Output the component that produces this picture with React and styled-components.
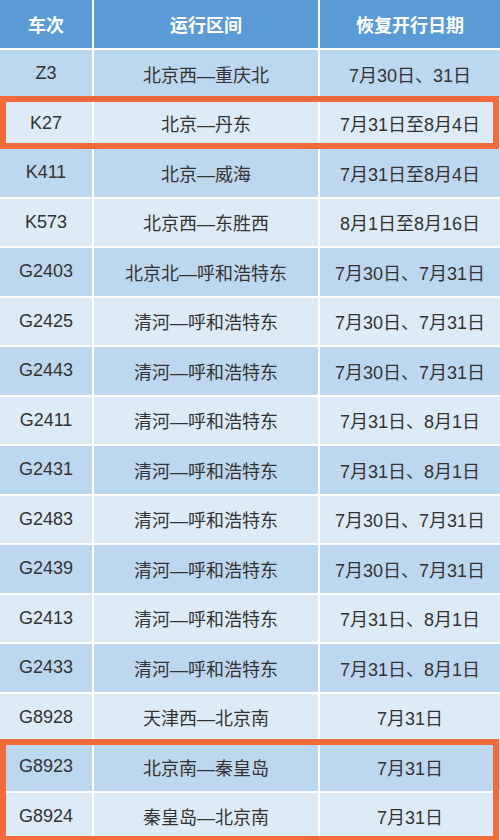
import styled, { createGlobalStyle } from 'styled-components';

const GlobalStyle = createGlobalStyle`
  html, body {
    margin: 0;
    padding: 0;
    background: #ffffff;
  }
  body {
    font-family: "Liberation Sans", "Noto Sans CJK SC", sans-serif;
  }
`;

const rows = [
  ['Z3', '北京西—重庆北', '7月30日、31日'],
  ['K27', '北京—丹东', '7月31日至8月4日'],
  ['K411', '北京—威海', '7月31日至8月4日'],
  ['K573', '北京西—东胜西', '8月1日至8月16日'],
  ['G2403', '北京北—呼和浩特东', '7月30日、7月31日'],
  ['G2425', '清河—呼和浩特东', '7月30日、7月31日'],
  ['G2443', '清河—呼和浩特东', '7月30日、7月31日'],
  ['G2411', '清河—呼和浩特东', '7月31日、8月1日'],
  ['G2431', '清河—呼和浩特东', '7月31日、8月1日'],
  ['G2483', '清河—呼和浩特东', '7月30日、7月31日'],
  ['G2439', '清河—呼和浩特东', '7月30日、7月31日'],
  ['G2413', '清河—呼和浩特东', '7月31日、8月1日'],
  ['G2433', '清河—呼和浩特东', '7月31日、8月1日'],
  ['G8928', '天津西—北京南', '7月31日'],
  ['G8923', '北京南—秦皇岛', '7月31日'],
  ['G8924', '秦皇岛—北京南', '7月31日'],
];

// groups of row indexes; highlighted groups get the orange frame
const groups = [
  { from: 0, to: 1 },
  { from: 1, to: 2, mark: true },
  { from: 2, to: 14 },
  { from: 14, to: 16, mark: true },
];

export default function App() {
  return (
    <>
      <GlobalStyle />
      <Table>
        <HeadRow>
          <HeadCell>车次</HeadCell>
          <HeadCell>运行区间</HeadCell>
          <HeadCell>恢复开行日期</HeadCell>
        </HeadRow>
        {groups.map((g) => (
          <Group key={g.from} $mark={g.mark}>
            {rows.slice(g.from, g.to).map((r, i) => (
              <Row key={r[0]} $dark={(g.from + i) % 2 === 0}>
                <Cell>{r[0]}</Cell>
                <Cell>{r[1]}</Cell>
                <Cell>{r[2]}</Cell>
              </Row>
            ))}
          </Group>
        ))}
      </Table>
    </>
  );
}

const Table = styled.div`
  width: 500px;
  display: flex;
  flex-direction: column;
  gap: 2px;
  background: #ffffff;
`;

const HeadRow = styled.div`
  display: grid;
  grid-template-columns: 92px 224px 1fr;
  gap: 2px;
  height: 48px;
`;

const HeadCell = styled.div`
  background: #5b9bd5;
  color: #ffffff;
  font-size: 18px;
  font-weight: bold;
  display: flex;
  align-items: center;
  justify-content: center;
`;

const Group = styled.div`
  position: relative;
  display: flex;
  flex-direction: column;
  gap: 2px;
  ${(p) =>
    p.$mark &&
    `
    &::after {
      content: '';
      position: absolute;
      top: -4px;
      bottom: -2px;
      left: 0;
      right: 1px;
      border: 6px solid #f46a3a;
      pointer-events: none;
    }
  `}
`;

const Row = styled.div`
  display: grid;
  grid-template-columns: 92px 224px 1fr;
  gap: 2px;
  height: 47.5px;
  & > div {
    background: ${(p) => (p.$dark ? '#bdd7ee' : '#ddebf7')};
  }
`;

const Cell = styled.div`
  color: #333333;
  font-size: 18px;
  display: flex;
  align-items: center;
  justify-content: center;
  white-space: nowrap;
`;
